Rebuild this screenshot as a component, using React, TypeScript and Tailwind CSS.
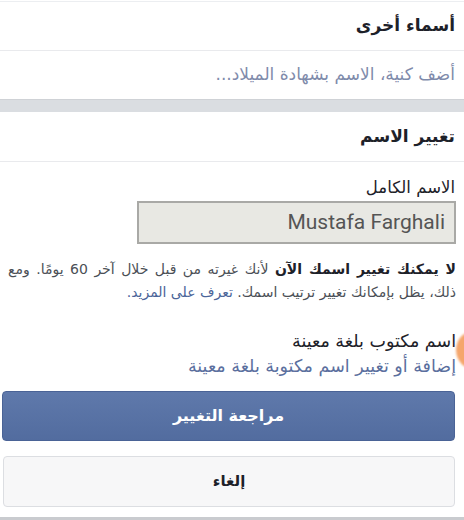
import React from "react";

export default function App() {
  const ar = { fontFamily: '"DejaVu Sans", "Noto Sans", sans-serif' };
  return (
    <div
      dir="rtl"
      className="relative w-[464px] h-[520px] overflow-hidden bg-white text-[#1d2129]"
      style={ar}
    >
      <div className="h-[2px] border-b border-[#eceef1]" />
      <div className="h-[49px] flex items-center px-[9px] border-b border-[#e9eaed]">
        <span className="text-[17px] font-bold">أسماء أخرى</span>
      </div>
      <div className="h-[48px] flex items-center px-[9px]">
        <span className="text-[17px] text-[#7f8bab]">أضف كنية، الاسم بشهادة الميلاد...</span>
      </div>
      <div className="h-[13px] bg-[#dadde1] border-t border-[#cfd2d6]" />
      <div className="h-[50px] flex items-center px-[9px] border-b border-[#e9eaed]">
        <span className="text-[17px] font-bold">تغيير الاسم</span>
      </div>
      <div className="px-[8px] pt-[16px]">
        <div className="text-[16.5px] leading-[20px] pr-[1px]">الاسم الكامل</div>
        <div className="mt-[3px] w-[319px] h-[43px] bg-[#e8e8e3] border-2 border-[#a9a9a6] flex items-center px-[9px]">
          <span
            className="text-[21px] text-[#555]"
            style={{ fontFamily: 'Roboto, "Liberation Sans", sans-serif' }}
          >
            Mustafa Farghali
          </span>
        </div>
        <p className="mt-[14px] text-[14px] leading-[23px] text-[#4b4f56] text-justify">
          <b className="text-[#1d2129]">لا يمكنك تغيير اسمك الآن</b> لأنك غيرته من قبل خلال آخر 60 يومًا. ومع ذلك، يظل بإمكانك تغيير ترتيب اسمك.{" "}
          <span className="text-[#4b6599]">تعرف على المزيد.</span>
        </p>
        <div className="mt-[25px] text-[17.5px] leading-[25px] text-[#1d2129]">اسم مكتوب بلغة معينة</div>
        <div className="text-[17.5px] leading-[24px] text-[#5b6f9e] whitespace-nowrap">إضافة أو تغيير اسم مكتوبة بلغة معينة</div>
      </div>
      <div className="mr-[9px] ml-[2px] mt-[13px] h-[50px] rounded-[4px] bg-gradient-to-b from-[#5f79ab] to-[#526c9f] border border-[#4a6396] flex items-center justify-center">
        <span className="text-white text-[16px] font-bold">مراجعة التغيير</span>
      </div>
      <div className="mr-[9px] ml-[3px] mt-[15px] h-[51px] rounded-[4px] bg-[#f7f7f8] border border-[#dcdee2] flex items-center justify-center">
        <span className="text-[#1d2129] text-[15px] font-bold">إلغاء</span>
      </div>
      <div className="absolute bottom-0 left-0 right-0 h-[3px] bg-[#c9cbcf]" />
      <div className="absolute w-[40px] h-[40px] rounded-full bg-[#f5a66c] blur-[1px] left-[456px] top-[330px]" />
    </div>
  );
}
